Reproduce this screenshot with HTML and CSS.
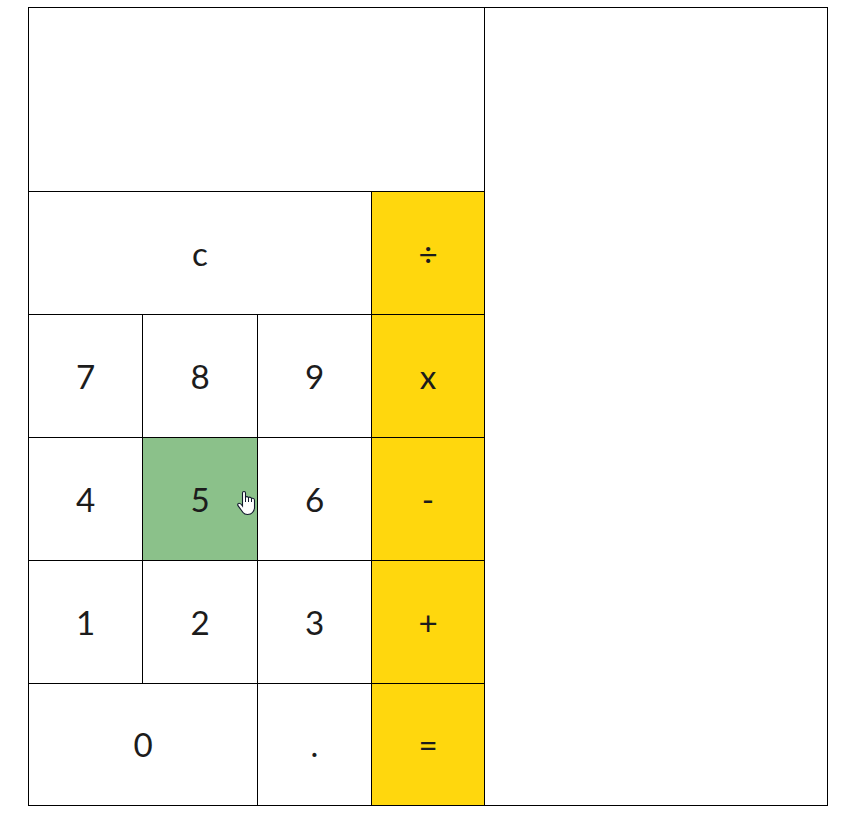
FILE: index.html
```html
<!DOCTYPE html>
<html lang="en">
<head>
<meta charset="utf-8">
<title>Calculator</title>
<link rel="stylesheet" href="styles.css">
</head>
<body>
<main class="calculator">
  <section class="pad">
    <div class="display"></div>
    <div class="key clear">c</div>
    <div class="key operator">÷</div>
    <div class="key">7</div>
    <div class="key">8</div>
    <div class="key">9</div>
    <div class="key operator">x</div>
    <div class="key">4</div>
    <div class="key active">5
      <svg class="cursor" width="20" height="26" viewBox="0 0 20 26"><path d="M5.5 16V3Q5.5 1.5 7 1.5T8.5 3V7Q10.2 6 11.5 7.5Q13.4 6.5 14.6 8.4Q17.5 7.8 17.5 10.5V18Q17.3 20.5 15.5 22.5Q14 24.5 10.5 24.5Q7.5 24.5 6 22.5L1 15.7Q.3 13.8 1.5 13.4Q3.2 12.7 5.5 16Z" fill="#fff" stroke="#10182c" stroke-width="1.1"/><path d="M8.5 6V12M11.5 7V12M14.5 8V12" stroke="#10182c" fill="none"/></svg>
    </div>
    <div class="key">6</div>
    <div class="key operator">-</div>
    <div class="key">1</div>
    <div class="key">2</div>
    <div class="key">3</div>
    <div class="key operator">+</div>
    <div class="key zero">0</div>
    <div class="key">.</div>
    <div class="key operator">=</div>
  </section>
  <aside class="history"></aside>
</main>
</body>
</html>
```
FILE: styles.css
```css
body {
  margin: 0;
  background: #fff;
  color: #1c1c1c;
  font-family: Lato, sans-serif;
  font-size: 33.2px;
  line-height: 41px;
}
.calculator {
  box-sizing: border-box;
  display: grid;
  grid-template-columns: 455px 1fr;
  column-gap: 1px;
  width: 800px;
  height: 799px;
  margin: 7px 0 0 28px;
  border: 1px solid #000;
  background: #000;
}
.pad {
  display: grid;
  grid-template-columns: 113px 114px 113px 112px;
  grid-template-rows: 183px 122px 122px 122px 122px 121px;
  gap: 1px;
}
.display {
  grid-column: span 4;
  background: #fff;
}
.key {
  position: relative;
  display: flex;
  align-items: center;
  justify-content: center;
  background: #fff;
}
.clear { grid-column: span 3; }
.zero { grid-column: span 2; }
.operator { background: #ffd70d; }
.active { background: #8bc18a; }
.history { background: #fff; }
.cursor {
  position: absolute;
  left: 94px;
  top: 52px;
}
```
